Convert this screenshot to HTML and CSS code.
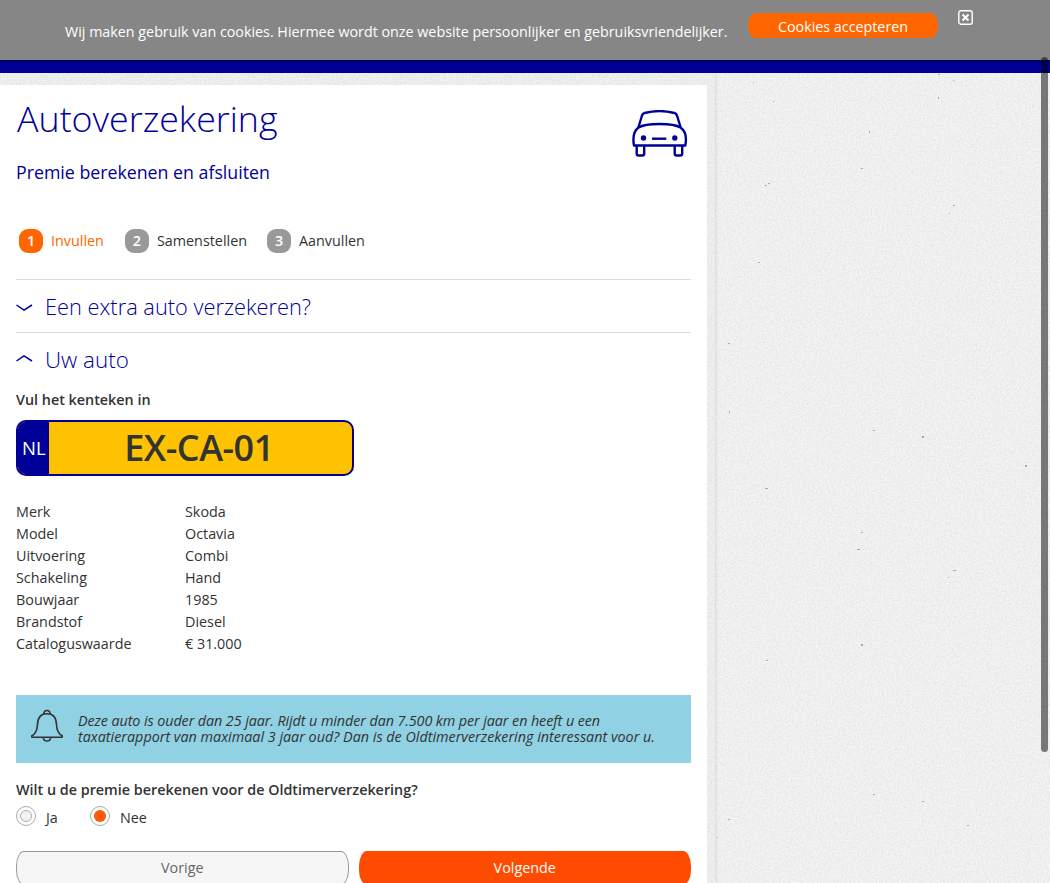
FILE: index.html
```html
<!DOCTYPE html>
<html lang="nl">
<head>
<meta charset="utf-8">
<title>Autoverzekering</title>
<link rel="stylesheet" href="styles.css">
</head>
<body>
<svg class="paper" width="1050" height="883" aria-hidden="true">
  <filter id="grain" x="0" y="0" width="100%" height="100%" color-interpolation-filters="sRGB">
    <feTurbulence type="fractalNoise" baseFrequency="0.55" numOctaves="3" seed="4"/>
    <feColorMatrix values="0.1 0 0 0 0.887  0.1 0 0 0 0.887  0.1 0 0 0 0.887  0 0 0 0 1"/>
  </filter>
  <rect width="1050" height="883" filter="url(#grain)"/>
  <g fill="#aaa">
    <rect x="938" y="74" width="2" height="1"/><rect x="953" y="80" width="1" height="1"/><rect x="938" y="97" width="1" height="2"/><rect x="773" y="101" width="1" height="1"/><rect x="753" y="82" width="1" height="1"/>
    <rect x="869" y="131" width="1" height="2"/><rect x="861" y="168" width="2" height="1"/><rect x="765" y="185" width="2" height="1"/><rect x="768" y="183" width="2" height="1"/><rect x="953" y="205" width="2" height="1"/><rect x="949" y="213" width="1" height="1"/>
    <rect x="758" y="262" width="2" height="1"/><rect x="728" y="343" width="2" height="1"/><rect x="729" y="411" width="1" height="2"/><rect x="922" y="436" width="2" height="2"/><rect x="873" y="430" width="2" height="1"/><rect x="1025" y="465" width="2" height="2"/><rect x="765" y="488" width="3" height="1"/>
    <rect x="861" y="532" width="2" height="1"/><rect x="857" y="549" width="3" height="1"/><rect x="953" y="570" width="3" height="1"/><rect x="948" y="577" width="1" height="1"/><rect x="861" y="644" width="2" height="2"/><rect x="766" y="660" width="2" height="1"/><rect x="728" y="819" width="2" height="1"/><rect x="717" y="837" width="1" height="1"/><rect x="873" y="794" width="2" height="1"/><rect x="922" y="801" width="2" height="1"/><rect x="967" y="825" width="2" height="1"/>
  </g>
</svg>

<div class="cookiebar">
  <p class="cookie-text">Wij maken gebruik van cookies. Hiermee wordt onze website persoonlijker en gebruiksvriendelijker.</p>
  <button class="cookie-accept">Cookies accepteren</button>
  <svg class="cookie-close" width="15" height="15" viewBox="0 0 15 15" fill="none" stroke="#fff"><rect x=".8" y=".8" width="13.4" height="13.4" rx="2" stroke-width="1.4"/><path d="M4.5 4.500l6 6M10.500 4.500l-6 6" stroke-width="2"/></svg>
</div>
<div class="topbar"></div>

<div class="wrapper">
  <main class="panel">
    <header class="head">
      <div>
        <h1>Autoverzekering</h1>
        <h2>Premie berekenen en afsluiten</h2>
      </div>
      <svg class="car" width="56" height="48" viewBox="0 0 56 48" fill="none" stroke="#009" stroke-width="2.4" stroke-linejoin="round"><path d="M6.500 17L10 5.500Q10.700 3.500 12.500 3Q27.500-.8 42.500 3Q44.300 3.500 45 5.500L48.500 17"/><path d="M2 35.500Q-.3 22.500 6.500 17.500C14 12.800 41 12.800 48.500 17.500Q55.800 22.500 53.300 35.500Z"/><path d="M4.700 35.500V43.500Q4.700 45.500 6.700 45.500H10.200Q12.200 45.500 12.200 43.500V35.500M42.700 35.500V43.500Q42.700 45.500 44.700 45.500H48.200Q50.200 45.500 50.200 43.500V35.500"/><path d="M20 28.700H34.300"/><g fill="#009" stroke="none"><circle cx="11.500" cy="28" r="2.700"/><circle cx="42.800" cy="28" r="2.700"/></g></svg>
    </header>

    <ol class="steps">
      <li class="step active"><b>1</b><span>Invullen</span></li>
      <li class="step"><b>2</b><span>Samenstellen</span></li>
      <li class="step"><b>3</b><span>Aanvullen</span></li>
    </ol>

    <h3 class="section"><svg width="17" height="8" viewBox="0 0 17 8"><path d="M.5 1L8 6.200L16 1"/></svg>Een extra auto verzekeren?</h3>
    <h3 class="section open"><svg width="17" height="8" viewBox="0 0 17 8"><path d="M.5 6L8 .9L16 6"/></svg>Uw auto</h3>

    <p class="label">Vul het kenteken in</p>
    <div class="plate"><span class="country">NL</span><span class="number">EX-CA-01</span></div>

    <dl class="specs">
      <dt>Merk</dt><dd>Skoda</dd>
      <dt>Model</dt><dd>Octavia</dd>
      <dt>Uitvoering</dt><dd>Combi</dd>
      <dt>Schakeling</dt><dd>Hand</dd>
      <dt>Bouwjaar</dt><dd>1985</dd>
      <dt>Brandstof</dt><dd>Diesel</dd>
      <dt>Cataloguswaarde</dt><dd>€ 31.000</dd>
    </dl>

    <div class="notice">
      <svg width="34" height="34" viewBox="0 0 34 34" fill="none" stroke="#333" stroke-width="1.600" stroke-linejoin="round"><path d="M1.800 28.300V26.800C6.500 24.500 7.300 20.500 7.500 15.500C7.800 8 11.300 4.800 17 4.800S26.200 8 26.500 15.500C26.700 20.500 27.500 24.500 32.200 26.800V28.300Z"/><path d="M13.700 5Q14 1.500 17 1.500T20.300 5M13.200 28.500Q13.700 32 17 32T20.800 28.500"/></svg>
      <p><span class="tight">Deze auto is ouder dan 25 jaar. Rijdt u minder dan 7.500 km per jaar en heeft u een</span><br>taxatierapport van maximaal 3 jaar oud? Dan is de Oldtimerverzekering interessant voor u.</p>
    </div>

    <p class="label question">Wilt u de premie berekenen voor de Oldtimerverzekering?</p>
    <div class="radios">
      <label class="radio"><i></i>Ja</label>
      <label class="radio checked"><i></i>Nee</label>
    </div>
    <div class="actions">
      <button class="btn">Vorige</button>
      <button class="btn primary">Volgende</button>
    </div>
  </main>
</div>
<div class="scrollbar"></div>
</body>
</html>
```
FILE: styles.css
```css
* { box-sizing: border-box; margin: 0; padding: 0; }
html, body { height: 883px; overflow: hidden; }
body { position: relative; background: #efefef; color: #333; font: 14.35px/22px "Open Sans", "Noto Sans", sans-serif; }
button { font: inherit; border: 0; }
.paper { position: absolute; inset: 0; z-index: -1; }

.cookiebar { position: relative; display: flex; align-items: flex-start; height: 60px; padding-left: 65px; background: #868686; color: #fff; box-shadow: 0 0 4px #000; font-size: 14.3px; }
.cookie-text { width: 683px; padding-top: 21px; white-space: nowrap; }
.cookie-accept { width: 190px; height: 25px; margin-top: 13px; padding-top: 1px; border-radius: 8px / 12px; background: #f60; color: #fff; line-height: 26px; }
.cookie-close { margin: 10px 0 0 20px; }
.topbar { height: 13px; background: #009; }

.wrapper { width: 715px; height: 810px; padding-top: 12px; background: rgba(0, 0, 0, .01); box-shadow: 1px 0 3px rgba(0, 0, 0, .1); }
.panel { width: 707px; height: 798px; padding: 0 16px; background: #fff; }

.head { display: flex; justify-content: space-between; height: 144px; color: #009; }
h1 { padding: 13px 0 0 1px; font-size: 35.8px; font-weight: 300; line-height: 40px; }
h2 { padding-top: 22px; font-size: 17.75px; font-weight: 400; line-height: 24px; }
.car { margin: 25px 3px 0 0; }

.steps { display: flex; gap: 20px; height: 50px; padding-left: 3px; list-style: none; line-height: 24px; }
.step { display: flex; gap: 8px; }
.step:nth-child(1) { width: 86px; }
.step:nth-child(2) { width: 122px; }
.step b { width: 24px; height: 24px; border-radius: 9px; background: #999; color: #fff; text-align: center; font-weight: 600; }
.step.active { color: #f60; }
.step.active b { background: #f60; }

.section { display: flex; align-items: center; gap: 12px; height: 53px; padding-top: 2px; border-top: 1px solid #ddd; color: #009; font-size: 21.8px; font-weight: 300; }
.section svg { margin-top: 1px; fill: none; stroke: #009; stroke-width: 1.5; }
.section.open { font-size: 22.4px; }
.section.open svg { margin-top: -2px; }

.label { margin-top: 4px; font-weight: 600; }
.plate { display: flex; width: 338px; height: 56px; margin-top: 9px; border: 2px solid #009; border-radius: 10px; background: #ffc200; overflow: hidden; }
.country { width: 31px; background: #009; color: #fff; padding-left: 4px; font-size: 18.5px; line-height: 52px; }
.number { flex: 1; padding-right: 3px; text-align: center; font-size: 36px; font-weight: 600; line-height: 51px; letter-spacing: -.5px; }

.specs { display: grid; grid-template-columns: 169px 1fr; grid-auto-rows: 22px; margin-top: 25px; }

.notice { display: flex; gap: 14px; height: 68px; margin-top: 40px; padding: 14px 0 0 14px; background: #90d1e3; font-style: italic; line-height: 16px; white-space: nowrap; }
.notice p { padding-top: 4px; }
.tight { letter-spacing: -.09px; }

.question { margin-top: 16px; }
.radios { display: flex; gap: 30px; height: 20px; margin-top: 5px; line-height: 23px; }
.radio { display: flex; gap: 10px; }
.radio:first-child { width: 44px; }
.radio i { display: grid; place-items: center; width: 20px; height: 20px; border: 1px solid #aaa; border-radius: 50%; background: #fff; }
.radio i::before { content: ""; width: 10px; height: 10px; border: 1px solid #aaa; border-radius: 50%; background: #f3f3f3; }
.radio.checked i::before { width: 12px; height: 12px; border: 0; background: #ff5a00; }

.actions { display: flex; gap: 10px; margin-top: 25px; }
.btn { flex: 1; height: 34px; border: 1px solid #999; border-radius: 8px / 15px; background: #f6f6f6; color: #666; line-height: 32px; }
.btn.primary { border-color: #ff4b00; background: #ff4b00; color: #fff; }

.scrollbar { position: absolute; left: 1041px; top: 57px; width: 7px; height: 695px; border-radius: 4px; background: rgba(0, 0, 0, .5); }
```
